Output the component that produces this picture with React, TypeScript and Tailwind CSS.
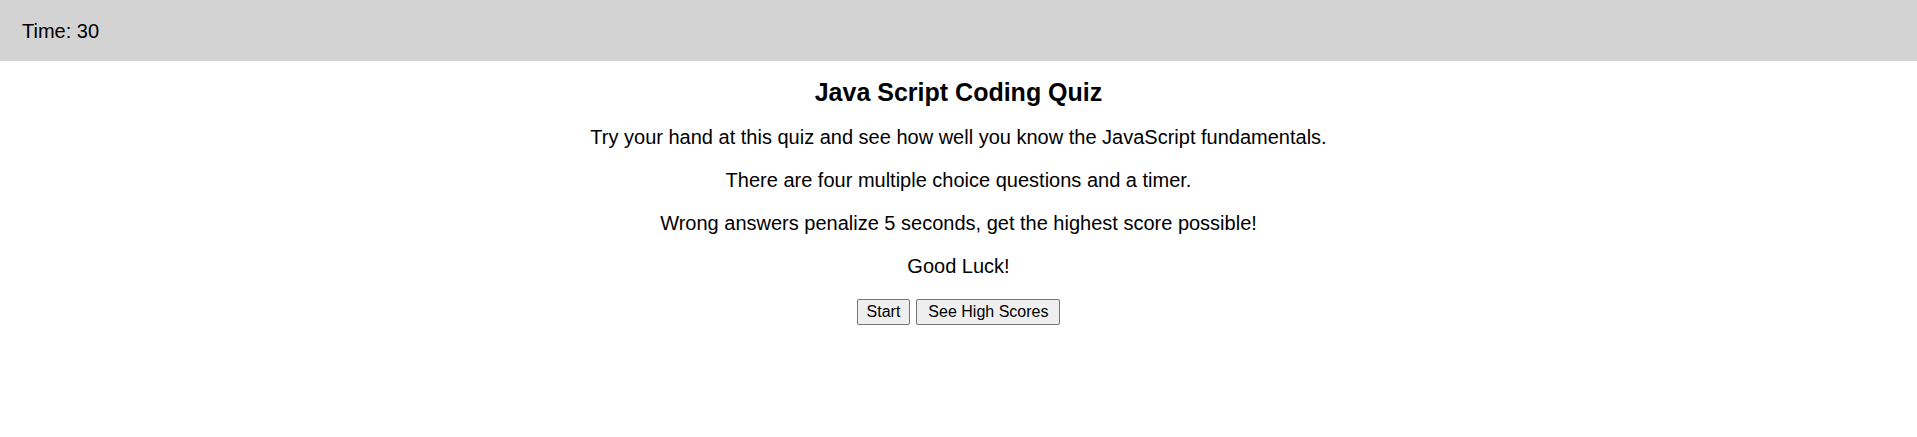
import React, { useState } from 'react';

const App: React.FC = () => {
  const [time] = useState<number>(30);

  return (
    <div className="min-h-screen bg-white text-black font-['Liberation_Sans',Arial,sans-serif]">
      <header className="h-[61px] bg-[#d3d3d3] flex items-center px-[22px]">
        <span className="text-[20px]">Time: {time}</span>
      </header>
      <main className="text-center">
        <h2 className="text-[25px] font-bold leading-[28px] pt-[17px]">Java Script Coding Quiz</h2>
        <div className="text-[20px] leading-[23px]">
          <p className="mt-[20px]">Try your hand at this quiz and see how well you know the JavaScript fundamentals.</p>
          <p className="mt-[20px]">There are four multiple choice questions and a timer.</p>
          <p className="mt-[20px]">Wrong answers penalize 5 seconds, get the highest score possible!</p>
          <p className="mt-[20px]">Good Luck!</p>
        </div>
        <div className="mt-[21px] flex justify-center gap-[6px]">
          <button className="h-[26px] px-[9px] text-[16px] leading-[18px] bg-[#efefef] border border-[#767676] rounded-[2px]">
            Start
          </button>
          <button className="h-[26px] px-[11px] text-[16px] leading-[18px] bg-[#efefef] border border-[#767676] rounded-[2px]">
            See High Scores
          </button>
        </div>
      </main>
    </div>
  );
};

export default App;
